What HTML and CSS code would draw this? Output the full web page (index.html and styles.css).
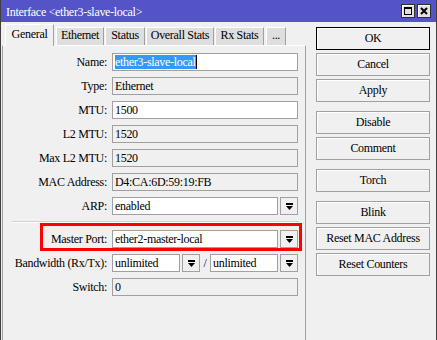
FILE: index.html
```html
<!DOCTYPE html>
<html lang="en">
<head>
  <meta charset="UTF-8" />
  <title>Interface &lt;ether3-slave-local&gt;</title>
  <link rel="stylesheet" href="styles.css">
</head>
<body>
<div class="window">
  <div class="titlebar">
    <span class="title">Interface &lt;ether3-slave-local&gt;</span>
    <div class="title-btns">
      <span class="tbtn">
        <svg width="10" height="10" viewBox="0 0 10 10"><rect x="1.5" y="1.5" width="7" height="7" fill="none" stroke="#000"/><rect x="1" y="1" width="8" height="2" fill="#000"/></svg>
      </span>
      <span class="tbtn">
        <svg width="10" height="10" viewBox="0 0 10 10"><path d="M2 2L8 8M8 2L2 8" stroke="#000" stroke-width="2"/></svg>
      </span>
    </div>
  </div>

  <div class="main">
    <div class="left">
      <div class="tabs">
        <div class="tab active tab-general">General</div>
        <div class="tab tab-ethernet">Ethernet</div>
        <div class="tab tab-status">Status</div>
        <div class="tab tab-overall">Overall Stats</div>
        <div class="tab tab-rx">Rx Stats</div>
        <div class="tab tab-more">...</div>
      </div>

      <div class="panel">
        <div class="row">
          <label>Name:</label>
          <div class="field"><span class="selected">ether3-slave-local</span><span class="caret"></span></div>
        </div>
        <div class="row">
          <label>Type:</label>
          <div class="field ro">Ethernet</div>
        </div>
        <div class="row">
          <label>MTU:</label>
          <div class="field">1500</div>
        </div>
        <div class="row">
          <label>L2 MTU:</label>
          <div class="field ro">1520</div>
        </div>
        <div class="row">
          <label>Max L2 MTU:</label>
          <div class="field ro">1520</div>
        </div>
        <div class="row">
          <label>MAC Address:</label>
          <div class="field ro">D4:CA:6D:59:19:FB</div>
        </div>
        <div class="row">
          <label>ARP:</label>
          <div class="combo">
            <div class="field">enabled</div>
            <span class="arrow"><svg width="7" height="7" viewBox="0 0 7 7"><rect x="0" y="0" width="7" height="2"/><path d="M0 3H7L3.5 7Z"/></svg></span>
          </div>
        </div>

        <div class="separator"></div>

        <div class="row marked">
          <label>Master Port:</label>
          <div class="combo">
            <div class="field">ether2-master-local</div>
            <span class="arrow"><svg width="7" height="7" viewBox="0 0 7 7"><rect x="0" y="0" width="7" height="2"/><path d="M0 3H7L3.5 7Z"/></svg></span>
          </div>
          <div class="red-box"></div>
        </div>
        <div class="row">
          <label>Bandwidth (Rx/Tx):</label>
          <div class="combo">
            <div class="field small">unlimited</div>
            <span class="arrow"><svg width="7" height="7" viewBox="0 0 7 7"><rect x="0" y="0" width="7" height="2"/><path d="M0 3H7L3.5 7Z"/></svg></span>
            <span class="slash">/</span>
            <div class="field small">unlimited</div>
            <span class="arrow"><svg width="7" height="7" viewBox="0 0 7 7"><rect x="0" y="0" width="7" height="2"/><path d="M0 3H7L3.5 7Z"/></svg></span>
          </div>
        </div>
        <div class="row">
          <label>Switch:</label>
          <div class="field ro">0</div>
        </div>
      </div>
    </div>

    <div class="buttons">
      <div class="btn default">OK</div>
      <div class="btn">Cancel</div>
      <div class="btn">Apply</div>
      <div class="btn group">Disable</div>
      <div class="btn">Comment</div>
      <div class="btn group">Torch</div>
      <div class="btn group">Blink</div>
      <div class="btn">Reset MAC Address</div>
      <div class="btn">Reset Counters</div>
    </div>
  </div>
</div>
</body>
</html>
```

FILE: styles.css
```css
body {
  margin: 0;
  background: #f0f0f0;
  font-family: "Liberation Serif", "Times New Roman", serif;
  font-size: 12px;
  letter-spacing: -0.3px;
  color: #000;
}

.window {
  width: 437px;
  height: 340px;
  box-sizing: border-box;
  border-left: 1px solid #404040;
  border-right: 1px solid #404040;
  display: flex;
  flex-direction: column;
  overflow: hidden;
}

.titlebar {
  height: 22px;
  flex: none;
  background: #5454c8;
  display: flex;
  justify-content: space-between;
}

.title {
  color: #fff;
  padding: 3px 0 0 5px;
  line-height: 19px;
  white-space: nowrap;
}

.title-btns {
  display: flex;
  gap: 2px;
  margin: 4px 5px 0 0;
}

.tbtn {
  width: 14px;
  height: 14px;
  box-sizing: border-box;
  border: 1px solid #303030;
  background: #e2e2e2;
  box-shadow: inset 1px 1px #fff;
  display: flex;
  align-items: center;
  justify-content: center;
}

.main {
  flex: 1;
  display: flex;
  padding-left: 1px;
}

.left {
  width: 304px;
  display: flex;
  flex-direction: column;
}

/* tabs */
.tabs {
  display: flex;
  align-items: flex-end;
  gap: 1px;
  padding: 2px 0 0 3px;
}

.tab {
  height: 18px;
  box-sizing: border-box;
  border-top: 1px solid #fff;
  border-left: 1px solid #fff;
  border-right: 1px solid #a0a0a0;
  background: #dedede;
  text-align: center;
  line-height: 15px;
  white-space: nowrap;
}

.tab.active {
  height: 22px;
  line-height: 18px;
  margin-bottom: -1px;
  background: #f0f0f0;
  position: relative;
  z-index: 1;
}

.tab-general { width: 49px; margin-right: 1px; }
.tab-ethernet { width: 48px; }
.tab-status { width: 40px; }
.tab-overall { width: 68px; }
.tab-rx { width: 49px; }
.tab-more { width: 20px; margin-left: 1px; }

.panel {
  flex: 1;
  border-top: 1px solid #fff;
  border-left: 1px solid #a0a0a0;
  border-right: 1px solid #a0a0a0;
  padding-top: 7px;
}

/* form rows */
.row {
  display: flex;
  height: 18px;
  margin-bottom: 6px;
}

.row label {
  width: 104px;
  margin-right: 5px;
  text-align: right;
  line-height: 18px;
  white-space: nowrap;
}

.field {
  width: 186px;
  height: 18px;
  box-sizing: border-box;
  border: 1px solid #a0a0a0;
  background: #fff;
  padding: 0 2px;
  line-height: 16px;
  white-space: nowrap;
  overflow: hidden;
}

.field.ro {
  background: #f0f0f0;
}

.selected {
  background: #3399ff;
  color: #fff;
}

.caret {
  display: inline-block;
  width: 1px;
  height: 14px;
  background: #000;
  vertical-align: -3px;
}

.combo {
  display: flex;
  gap: 2px;
  width: 186px;
}

.combo .field {
  flex: 1;
  width: auto;
}

.combo .field.small {
  flex: none;
  width: 68px;
}

.arrow {
  width: 18px;
  height: 18px;
  flex: none;
  box-sizing: border-box;
  border: 1px solid #a0a0a0;
  background: #f0f0f0;
  display: flex;
  align-items: center;
  justify-content: center;
}

.slash {
  width: 7px;
  text-align: center;
  line-height: 18px;
}

.separator {
  height: 0;
  border-top: 1px solid #d0d0d0;
  border-bottom: 1px solid #fff;
  margin: 2px 6px 7px 9px;
}

.marked {
  position: relative;
}

.red-box {
  position: absolute;
  left: 37px;
  top: -7px;
  width: 262px;
  height: 28px;
  box-sizing: border-box;
  border: 3px solid #ff0000;
}

/* right buttons */
.buttons {
  width: 114px;
  margin-left: 10px;
  padding-top: 5px;
}

.btn {
  height: 23px;
  box-sizing: border-box;
  border: 1px solid #a0a0a0;
  box-shadow: inset 1px 1px #fff;
  background: #f0f0f0;
  text-align: center;
  line-height: 21px;
  margin-bottom: 3px;
  white-space: nowrap;
}

.btn.default {
  border-color: #000;
}

.btn.group {
  margin-top: 9px;
}
```
